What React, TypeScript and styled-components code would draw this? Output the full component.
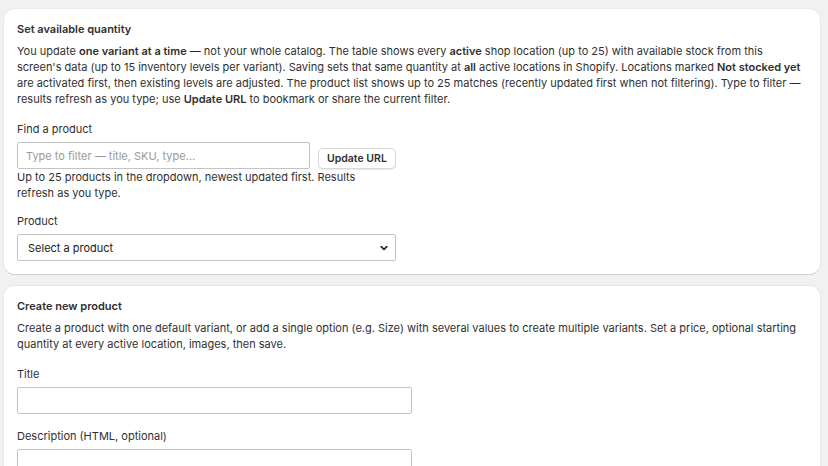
import React from "react";
import styled, { createGlobalStyle } from "styled-components";

const Global = createGlobalStyle`
  html, body { margin: 0; padding: 0; background: #f1f1f1; }
  body {
    font-family: Inter, "Noto Sans", "Liberation Sans", sans-serif;
    color: #303030;
    -webkit-font-smoothing: antialiased;
  }
  * { box-sizing: border-box; }
`;

const Page = styled.div`
  display: flex;
  flex-direction: column;
  gap: 12px;
  padding: 9px 8px 0 4px;
`;

const Card = styled.section`
  background: #ffffff;
  border-radius: 10px;
  box-shadow: 0 1px 0 rgba(0, 0, 0, 0.1), 0 0 0 1px rgba(0, 0, 0, 0.03);
  padding: 14px 13px 13px 13px;
  display: flex;
  flex-direction: column;
`;

const CardTitle = styled.h2`
  margin: 0;
  font-size: 11px;
  font-weight: 600;
  line-height: 12px;
  color: #303030;
`;

const Para = styled.p`
  margin: 8px 0 0 0;
  font-size: 11px;
  line-height: 16px;
  color: #303030;
`;

const Strong = styled.strong`
  font-weight: 600;
  line-height: 16px;
`;

const Field = styled.div<{ $gapTop: number }>`
  display: flex;
  flex-direction: column;
  margin-top: ${(p) => p.$gapTop}px;
`;

const Label = styled.label`
  font-size: 11px;
  line-height: 14px;
  margin-bottom: 6px;
  color: #303030;
`;

const SearchGroup = styled.div`
  display: flex;
  flex-direction: column;
  width: 378px;
`;

const SearchRow = styled.div`
  display: flex;
  align-items: flex-end;
  gap: 8px;
`;

const TextInput = styled.input<{ $w: number }>`
  flex-shrink: 0;
  width: ${(p) => p.$w}px;
  height: 27px;
  border: 1px solid #c4c4c4;
  border-radius: 2px;
  padding: 0 8px;
  font-family: inherit;
  font-size: 11px;
  color: #303030;
  background: #fff;
  outline: none;
  &::placeholder { color: #9a9a9a; }
`;

const Button = styled.button`
  flex-shrink: 0;
  height: 21px;
  padding: 0 8px;
  border: 1px solid #d8d8d8;
  border-radius: 5px;
  background: #fff;
  box-shadow: 0 1px 0 rgba(0, 0, 0, 0.08);
  font-family: inherit;
  font-size: 10.5px;
  font-weight: 600;
  color: #303030;
  white-space: nowrap;
`;

const Helper = styled.div`
  font-size: 11px;
  line-height: 16px;
  color: #303030;
`;

const SelectBox = styled.div`
  width: 379px;
  height: 27px;
  border: 1px solid #c4c4c4;
  border-radius: 2px;
  display: flex;
  align-items: center;
  justify-content: space-between;
  padding: 0 6px 0 10px;
  font-size: 11px;
  color: #1a1a1a;
  background: #fff;
`;

const Chevron = () => (
  <svg width="10" height="10" viewBox="0 0 10 10">
    <path d="M2.2 3.6 L5 6.4 L7.8 3.6" fill="none" stroke="#222" strokeWidth="1.6" strokeLinecap="round" strokeLinejoin="round" />
  </svg>
);

export default function App() {
  return (
    <>
      <Global />
      <Page>
        <Card>
          <CardTitle>Set available quantity</CardTitle>
          <Para>
            You update <Strong>one variant at a time</Strong> — not your whole catalog. The table shows every{" "}
            <Strong>active</Strong> shop location (up to 25) with available stock from this screen's data (up to 15
            inventory levels per variant). Saving sets that same quantity at <Strong>all</Strong> active locations in
            Shopify. Locations marked <Strong>Not stocked yet</Strong> are activated first, then existing levels are
            adjusted. The product list shows up to 25 matches (recently updated first when not filtering).
            Type to filter — results refresh as you type; use <Strong>Update URL</Strong> to bookmark or share the
            current filter.
          </Para>
          <Field $gapTop={15}>
            <Label>Find a product</Label>
            <SearchGroup>
              <SearchRow>
                <TextInput $w={293} placeholder="Type to filter — title, SKU, type…" />
                <Button>Update URL</Button>
              </SearchRow>
              <Helper>
                Up to 25 products in the dropdown, newest updated first. Results refresh as you type.
              </Helper>
            </SearchGroup>
          </Field>
          <Field $gapTop={13}>
            <Label>Product</Label>
            <SelectBox>
              <span>Select a product</span>
              <Chevron />
            </SelectBox>
          </Field>
        </Card>
        <Card>
          <CardTitle>Create new product</CardTitle>
          <Para>
            Create a product with one default variant, or add a single option (e.g. Size) with several values
            to create multiple variants. Set a price, optional starting quantity at every active location,
            images, then save.
          </Para>
          <Field $gapTop={15}>
            <Label>Title</Label>
            <TextInput $w={395} />
          </Field>
          <Field $gapTop={15}>
            <Label>Description (HTML, optional)</Label>
            <TextInput $w={395} />
          </Field>
        </Card>
      </Page>
    </>
  );
}
